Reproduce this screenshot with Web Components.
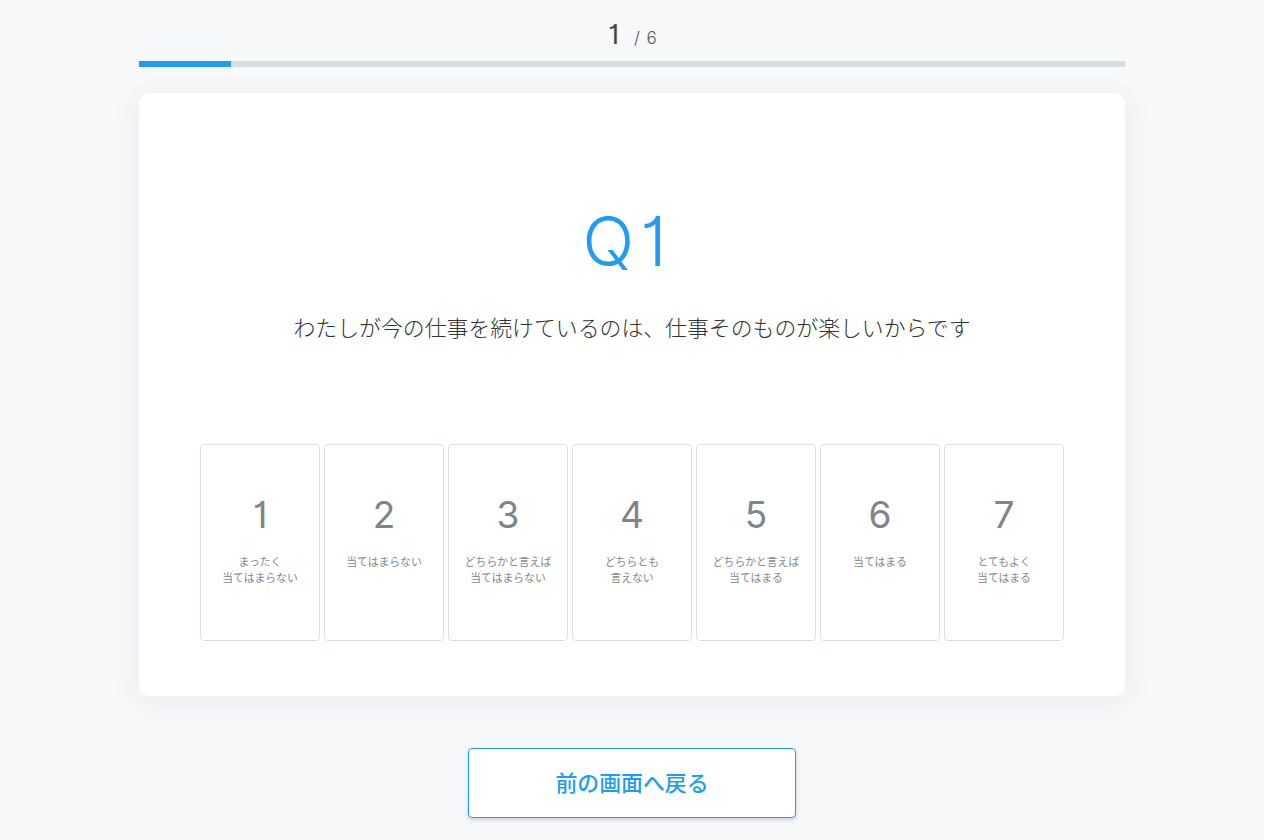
<!DOCTYPE html>
<html lang="ja"><head><meta charset="utf-8"><title>Q1</title>
<style>
html,body{margin:0;height:840px;overflow:hidden;background:#f7f8fa}
body{font-family:"Noto Sans CJK JP","Noto Sans",sans-serif}
</style></head><body>
<survey-page></survey-page>
<script>
const FF='"Noto Sans CJK JP","Noto Sans",sans-serif';
class SurveyProgress extends HTMLElement{constructor(){super();this.attachShadow({mode:'open'}).innerHTML=`<style>
:host{display:block}
.count{height:61px;box-sizing:border-box;padding-top:17px;display:flex;justify-content:center;align-items:baseline;color:#444;line-height:36px;font-family:Inter,sans-serif;font-feature-settings:"cv01";padding-left:1px}
.cur{font-size:27px;margin-right:15px;font-weight:400}.tot{font-size:17px;color:#555;font-weight:300;word-spacing:2px}
.bar{height:6px;background:#d5dfe4}.fill{height:100%;width:92px;background:#1f9df5}
</style><div class="count"><span class="cur">1</span><span class="tot">/ 6</span></div><div class="bar"><div class="fill"></div></div>`}}
customElements.define('survey-progress',SurveyProgress);
class OptionCard extends HTMLElement{constructor(){super();this.attachShadow({mode:'open'}).innerHTML=`<style>
:host{display:block;width:120px;height:197px;box-sizing:border-box;border:1px solid #d9e2e8;border-radius:4px;background:#fff;text-align:center;font-family:${FF}}
.n{font-family:Inter,sans-serif;font-feature-settings:"cv01";font-size:37px;line-height:44px;margin-top:48px;font-weight:400;color:#7f8588}
.l{font-size:10.8px;font-weight:400;line-height:15.5px;margin-top:17px;color:#85898c;white-space:pre-line}
</style><div class="n"></div><div class="l"><slot></slot></div>`}
connectedCallback(){this.shadowRoot.querySelector('.n').textContent=this.getAttribute('n')}}
customElements.define('option-card',OptionCard);
class QuestionCard extends HTMLElement{constructor(){super();this.attachShadow({mode:'open'}).innerHTML=`<style>
:host{display:block;height:603px;box-sizing:border-box;margin-top:26px;background:#fff;border-radius:10px;box-shadow:0 4px 30px rgba(60,70,90,.08);padding-top:103px;text-align:center;font-family:${FF}}
.q{font-family:Inter,sans-serif;font-feature-settings:"cv01";font-size:68px;line-height:90px;font-weight:300;color:#1f9df5;letter-spacing:6px;padding-right:9px}
.t{font-size:21.87px;font-weight:300;line-height:32px;margin-top:25px;color:#333;padding-bottom:2px}
.opts{display:flex;gap:4px;justify-content:center;margin-top:99px}
</style><div class="q">Q1</div><div class="t">わたしが今の仕事を続けているのは、仕事そのものが楽しいからです</div><div class="opts"><slot></slot></div>`}}
customElements.define('question-card',QuestionCard);
class BackButton extends HTMLElement{constructor(){super();this.attachShadow({mode:'open'}).innerHTML=`<style>
:host{display:flex;align-items:center;justify-content:center;width:328px;height:70px;box-sizing:border-box;margin:52px auto 0;padding-bottom:4px;background:#fff;border:1px solid #1f9df5;border-radius:4px;box-shadow:0 2px 4px rgba(40,60,90,.2);color:#1f9df5;font:500 21.9px ${FF}}
</style><slot></slot>`}}
customElements.define('back-button',BackButton);
class SurveyPage extends HTMLElement{constructor(){super();this.attachShadow({mode:'open'}).innerHTML=`<style>
:host{display:block;width:986px;margin:0 auto}
</style><survey-progress></survey-progress>
<question-card>
<option-card n="1">まったく
当てはまらない</option-card>
<option-card n="2">当てはまらない</option-card>
<option-card n="3">どちらかと言えば
当てはまらない</option-card>
<option-card n="4">どちらとも
言えない</option-card>
<option-card n="5">どちらかと言えば
当てはまる</option-card>
<option-card n="6">当てはまる</option-card>
<option-card n="7">とてもよく
当てはまる</option-card>
</question-card>
<back-button>前の画面へ戻る</back-button>`}}
customElements.define('survey-page',SurveyPage);
</script></body></html>
